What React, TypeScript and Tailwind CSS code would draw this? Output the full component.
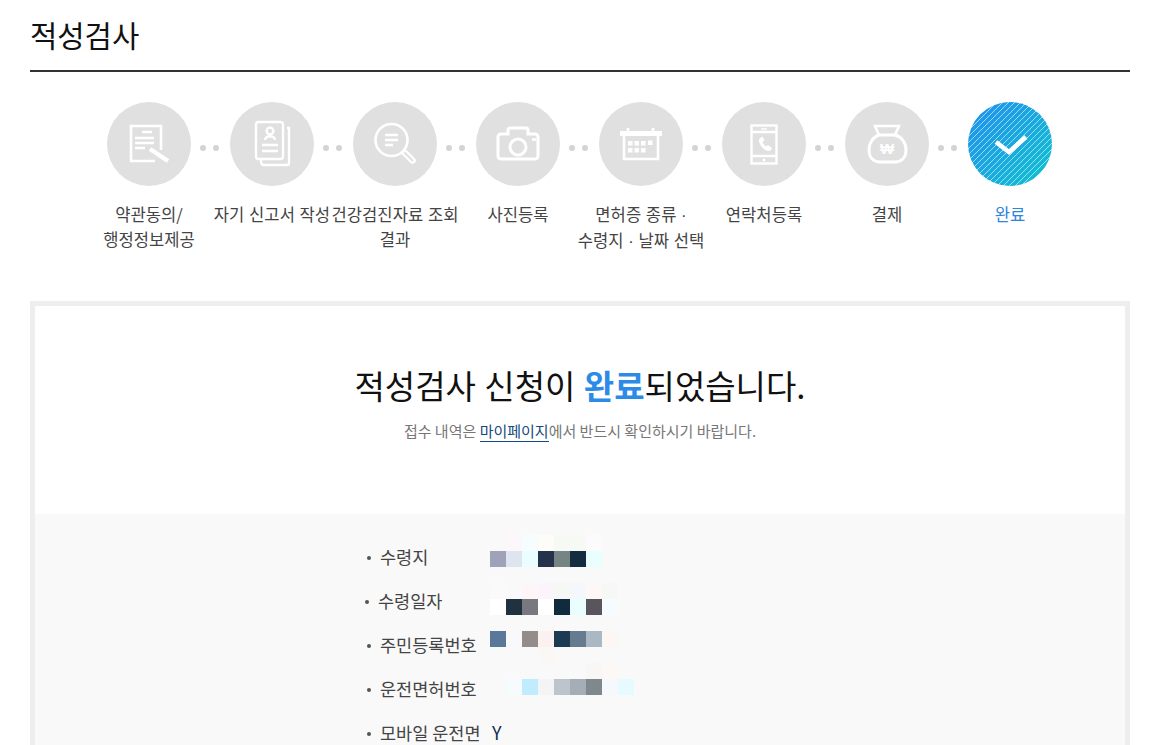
const F = '"Noto Sans CJK KR", "Noto Sans", sans-serif';

function Doc() {
  return (
    <svg width="84" height="84" viewBox="0 0 84 84" fill="none" stroke="#fff" strokeWidth="2.6">
      <path d="M54 48V24H24v35h24" />
      <path d="M35 30h10M28 36h19M28 41h19M28 46h10" strokeWidth="2.4" />
      <path d="M43 47l18 12" strokeWidth="4.5" />
    </svg>
  );
}
function Resume() {
  return (
    <svg width="84" height="84" viewBox="0 0 84 84" fill="none" stroke="#fff" strokeWidth="2.4">
      <rect x="26" y="20" width="27" height="37" rx="2.5" />
      <path d="M57 26h2v35a2 2 0 0 1-2 2H34a3 3 0 0 1-3-3v-2" />
      <circle cx="40" cy="29" r="3.4" />
      <path d="M35 38c0-5 10-5 10 0" />
      <path d="M32 43h16M32 49h16" />
    </svg>
  );
}
function Search() {
  return (
    <svg width="84" height="84" viewBox="0 0 84 84" fill="none" stroke="#fff" strokeWidth="2.6">
      <circle cx="38.500" cy="38" r="16" />
      <path d="M32 33h13M32 38h13M32 43h8" />
      <path d="M49 51l3-3 9 9a2.100 2.100 0 0 1-3 3z" strokeWidth="2.2" />
    </svg>
  );
}
function Camera() {
  return (
    <svg width="84" height="84" viewBox="0 0 84 84" fill="none" stroke="#fff" strokeWidth="3">
      <path d="M26 32h6v-4a2 2 0 0 1 2-2h16a2 2 0 0 1 2 2v4h7a3 3 0 0 1 3 3v19a3 3 0 0 1-3 3H25a3 3 0 0 1-3-3V35a3 3 0 0 1 3-3z" />
      <circle cx="42" cy="45" r="8" strokeWidth="3" />
      <path d="M56 37.500h4" strokeWidth="2.600" />
    </svg>
  );
}
function Calendar() {
  return (
    <svg width="84" height="84" viewBox="0 0 84 84" fill="none" stroke="#fff" strokeWidth="2.6">
      <path d="M21 29h42v5H21z" fill="#fff" stroke="none" />
      <path d="M25 33v24h34V33" />
      <path d="M29 26v4M54 26v4" strokeWidth="2.800" />
      <path d="M29 39h4.500v4.500H29zM35.500 39H40v4.500h-4.500zM42 39h4.500v4.500H42zM49 38.500h4.500V43H49zM29 46h4.500v4.500H29zM35.500 46H40v4.500h-4.500zM42 46h4.500v4.500H42z" fill="#fff" stroke="none" />
    </svg>
  );
}
function Phone() {
  return (
    <svg width="84" height="84" viewBox="0 0 84 84" fill="none" stroke="#fff" strokeWidth="2.4">
      <rect x="29.500" y="23.500" width="25" height="38" />
      <path d="M29.500 30h25M29.500 54h25" />
      <path d="M39 27h6" strokeWidth="1.400" />
      <circle cx="42" cy="58" r="1.500" fill="#fff" stroke="none" />
      <path d="M38 36c-2 2-1 5 2 9s7 5 9 3l1-2-4-3-2 1.500c-1.500-1-3-3-3.500-4.500l2-1.500-2-4z" fill="#fff" stroke="none" />
    </svg>
  );
}
function Bag() {
  return (
    <svg width="84" height="84" viewBox="0 0 84 84" fill="none" stroke="#fff" strokeWidth="2.6">
      <path d="M34 33l-4-9h24l-4 9" />
      <path d="M34 33h16c7 2 11 8 11 15 0 8-5 12-11 12H35c-6 0-11-4-11-12 0-7 4-13 10-15z" strokeWidth="3" />
      <text x="42" y="52" textAnchor="middle" fontSize="15" fontWeight="700" fill="#fff" stroke="none" fontFamily="Liberation Sans, sans-serif">₩</text>
    </svg>
  );
}

function Mid() {
  return <span className="font-['Liberation_Sans']">·</span>;
}

const steps: { icon: React.ReactNode; label: React.ReactNode }[] = [
  { icon: <Doc />, label: <>약관동의/<br />행정정보제공</> },
  { icon: <Resume />, label: "자기 신고서 작성" },
  { icon: <Search />, label: "건강검진자료 조회 결과" },
  { icon: <Camera />, label: "사진등록" },
  { icon: <Calendar />, label: <>면허증 종류 <Mid /><br />수령지 <Mid /> 날짜 선택</> },
  { icon: <Phone />, label: "연락처등록" },
  { icon: <Bag />, label: "결제" },
];

function Dots() {
  return (
    <div className="w-[39px] h-[84px] flex items-center justify-center gap-[7px] pt-[8px] pr-[2px]">
      <span className="w-[6px] h-[6px] rounded-full bg-[#d4d4d4]" />
      <span className="w-[6px] h-[6px] rounded-full bg-[#d4d4d4]" />
    </div>
  );
}

function Mosaic({ rows }: { rows: string[][] }) {
  return (
    <div className="flex flex-col">
      {rows.map((r, i) => (
        <div key={i} className="flex h-[16px]">
          {r.map((c, j) => (
            <span key={j} className="w-[16px] h-[16px]" style={{ backgroundColor: c }} />
          ))}
        </div>
      ))}
    </div>
  );
}

const T = "transparent";

function Row({ label, children, shift, mosaicClass }: { label: string; children: React.ReactNode; shift?: boolean; mosaicClass?: string }) {
  return (
    <div className="h-[44px] flex items-center text-[17.5px] text-[#444]">
      <div className={shift ? "w-[125px] flex items-center" : "w-[123px] ml-[2px] flex items-center"}>
        <span className="w-[4px] h-[4px] rounded-full bg-[#555] mr-[9px] mt-[2px]" />
        <span className="whitespace-nowrap">{label}</span>
      </div>
      <div className={mosaicClass}>{children}</div>
    </div>
  );
}

export default function App() {
  return (
    <div className="h-[745px] overflow-hidden bg-white" style={{ fontFamily: F }}>
      <div className="mx-[30px] w-[1100px]">
        <h1 className="h-[72px] border-b-2 border-[#333] pt-[13px] text-[29.700px] leading-[44px] font-normal text-[#111]">적성검사</h1>

        <div className="flex justify-center pt-[30px] h-[229px] pr-[1px]">
          {steps.map((s, i) => (
            <div key={i} className="flex">
              <div className="w-[84px] flex flex-col items-center">
                <div className="w-[84px] h-[84px] rounded-full bg-[#e0e0e0] shrink-0">{s.icon}</div>
                <div className="w-[140px] mt-[16px] text-center text-[16.600px] leading-[25px] text-[#444] break-keep [word-spacing:1px]">{s.label}</div>
              </div>
              <Dots />
            </div>
          ))}
          <div className="w-[84px] flex flex-col items-center">
            <div className="w-[84px] h-[84px] rounded-full shrink-0 bg-[repeating-linear-gradient(135deg,transparent_0,transparent_3.100px,rgba(255,255,255,0.75)_3.650px,transparent_4.243px),linear-gradient(135deg,#2090ee,#10c2d2)]">
              <svg width="84" height="84" viewBox="0 0 84 84" fill="none" stroke="#fff" strokeWidth="4.500">
                <path d="M28 40l13 10 17-15" />
              </svg>
            </div>
            <div className="w-[140px] mt-[16px] text-center text-[16.600px] leading-[25px] text-[#2d86db]">완료</div>
          </div>
        </div>

        <div className="border-[5px] border-[#eee] h-[600px]">
          <div className="h-[208px] bg-white flex flex-col items-center pt-[55px]">
            <p className="text-[33px] leading-[48px] text-[#111] [word-spacing:1px]">
              적성검사 신청이 <strong className="font-bold text-[#2b8be6]">완료</strong>되었습니다.
            </p>
            <p className="mt-[10px] text-[15px] leading-[24px] text-[#777]">
              접수 내역은 <span className="text-[#174a7c] border-b border-[#174a7c]">마이페이지</span>에서 반드시 확인하시기 바랍니다.
            </p>
          </div>
          <div className="bg-[#f9f9f9] h-[400px] pl-[330px] pt-[21px]">
            <Row label="수령지" mosaicClass="-mt-[12px]">
              <Mosaic rows={[
                [T, "#fbf7fa", "#f6fdfe", "#fefcf9", "#f6f9f4", "#f7faf4", "#fcfafd"],
                ["#a0a2b9", "#dde6ee", "#eafeff", "#24324a", "#768584", "#132c40", "#e9feff"],
              ]} />
            </Row>
            <Row label="수령일자" shift mosaicClass="-mt-[4px]">
              <Mosaic rows={[
                ["#fcf9fa", "#f9f8fa", "#fdf6f8", "#fbf4fa", "#f6f8f6", "#f6f7fc", "#fdf8f5", "#f6f8f5"],
                ["#ffffff", "#20323f", "#79787e", "#ffffff", "#122b3c", "#e9feff", "#58565c", "#f6fbff"],
              ]} />
            </Row>
            <Row label="주민등록번호" mosaicClass="mt-[4px]">
              <Mosaic rows={[
                ["#5a7899", "#f9f9fb", "#948c8b", "#fbf1f0", "#1c3a52", "#667b90", "#a9b8c2", "#fcf6f5"],
                [T, T, T, "#fbf7f5", T, T, T, T],
              ]} />
            </Row>
            <Row label="운전면허번호" mosaicClass="-mt-[20px]">
              <Mosaic rows={[
                [T, T, T, T, T, T, "#f8f7f6", "#fbf8f5", T],
                [T, "#f6fbfd", "#c0ecff", "#f4f4f7", "#bbc5cb", "#a5aeb6", "#7f888c", "#f5f8fc", "#e6fbff"],
              ]} />
            </Row>
            <Row label="모바일 운전면">
              <span className="ml-[2px] text-[18px] text-[#0f2f50]">Y</span>
            </Row>
          </div>
        </div>
      </div>
    </div>
  );
}
